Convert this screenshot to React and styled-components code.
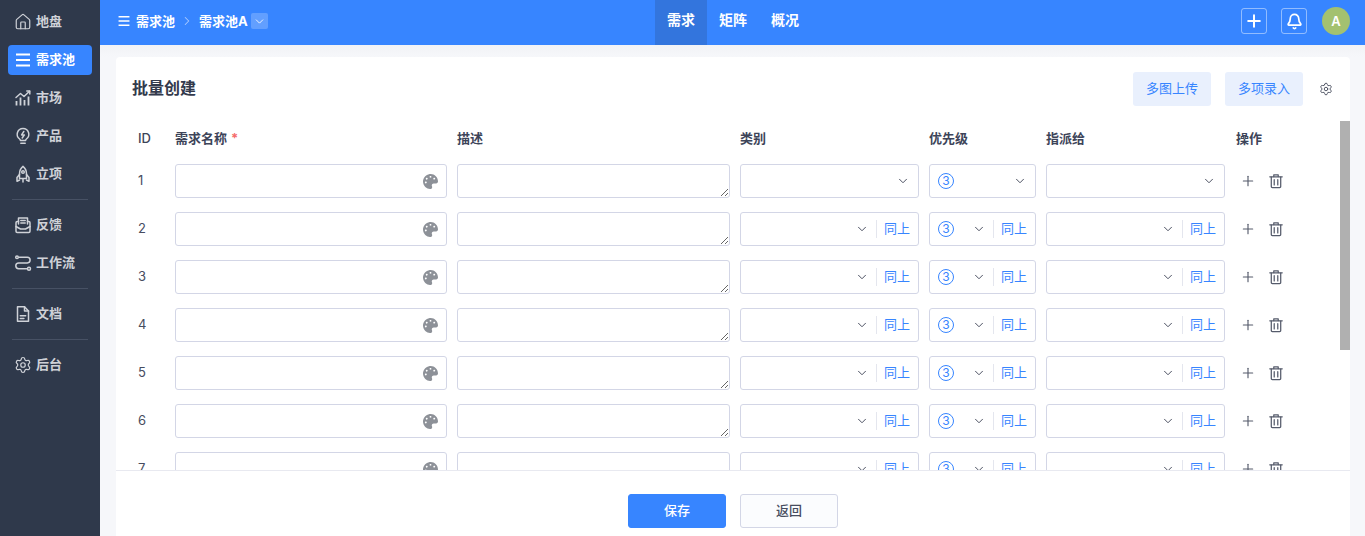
import React from "react";
import styled, { createGlobalStyle } from "styled-components";
import { House, Settings, Plus, Bell, ChevronDown, ChevronRight } from "lucide-react";
import { FaPalette } from "react-icons/fa";

const GlobalStyle = createGlobalStyle`
  html, body {
    margin: 0;
    height: 100%;
    overflow: hidden;
    font-family: Inter, "Noto Sans CJK SC", sans-serif;
    font-size: 13px;
  }
  #root { height: 100%; }
  * { box-sizing: border-box; }
`;

const Page = styled.div`
  display: flex;
  height: 100%;
  background: #f5f6f9;
`;

const Sidebar = styled.nav`
  width: 100px;
  flex-shrink: 0;
  padding: 7px 8px 0;
  display: flex;
  flex-direction: column;
  gap: 8px;
  background: #2f394b;
`;

const NavItem = styled.div`
  display: flex;
  align-items: center;
  gap: 4px;
  height: 30px;
  padding-left: 6px;
  border-radius: 4px;
  font-size: 13px;
  font-weight: 700;
  color: ${({ $active }) => ($active ? "#fff" : "#cfd2d8")};
  background: ${({ $active }) => ($active ? "#3785ff" : "transparent")};
`;

const NavLabel = styled.span`
  padding-bottom: 3px;
`;

const NavDivider = styled.div`
  height: 1px;
  margin: 2px 4px;
  background: #475164;
`;

const Content = styled.div`
  flex: 1;
  min-width: 0;
  display: flex;
  flex-direction: column;
`;

const Topbar = styled.header`
  height: 45px;
  flex-shrink: 0;
  display: grid;
  grid-template-columns: 1fr auto 1fr;
  align-items: stretch;
  padding: 0 15px 0 16px;
  background: #3785ff;
  color: #fff;
`;

const Crumbs = styled.div`
  display: flex;
  align-items: center;
  padding: 0 0 3px 1px;
  font-size: 13px;
  font-weight: 700;
`;

const CrumbText = styled.span`
  margin-left: ${({ $gap }) => $gap || 0}px;
  padding-bottom: 2px;
`;

const CrumbArrow = styled.span`
  display: flex;
  margin: 0 5px;
  color: #a9c9ff;
`;

const CrumbDrop = styled.span`
  width: 17px;
  height: 16px;
  margin-left: 3px;
  display: flex;
  align-items: center;
  justify-content: center;
  border-radius: 2px;
  background: rgba(255, 255, 255, 0.22);
`;

const Tabs = styled.div`
  display: flex;
`;

const Tab = styled.div`
  display: flex;
  align-items: center;
  padding: 0 12px 8px;
  font-size: 14px;
  font-weight: 700;
  background: ${({ $active }) => ($active ? "#3375dd" : "transparent")};
`;

const TopActions = styled.div`
  display: flex;
  align-items: center;
  justify-content: flex-end;
  padding-bottom: 3px;
`;

const IconBox = styled.div`
  width: 26px;
  height: 26px;
  margin-right: 14px;
  display: flex;
  align-items: center;
  justify-content: center;
  border: 1px solid rgba(255, 255, 255, 0.45);
  border-radius: 3px;
`;

const Avatar = styled.div`
  width: 28px;
  height: 28px;
  margin-left: 1px;
  display: flex;
  align-items: center;
  justify-content: center;
  border-radius: 50%;
  font-size: 13px;
  font-weight: 600;
  background: #a3c170;
`;

const Main = styled.main`
  flex: 1;
  min-height: 0;
  padding: 12px 15px 0 16px;
  background: linear-gradient(#f2f3f6, #f6f7fa 12px);
`;

const Card = styled.section`
  height: 100%;
  display: flex;
  flex-direction: column;
  border-radius: 4px 4px 0 0;
  background: #fff;
`;

const CardHead = styled.div`
  height: 64px;
  flex-shrink: 0;
  display: flex;
  align-items: center;
  padding: 0 17px 0 16px;
`;

const CardTitle = styled.h2`
  flex: 1;
  margin: 0;
  padding-bottom: 4px;
  font-size: 16px;
  font-weight: 700;
  color: #333a4c;
`;

const LightButton = styled.button`
  width: 78px;
  height: 34px;
  margin-right: 14px;
  padding: 0 0 3px;
  border: 0;
  border-radius: 3px;
  font: inherit;
  color: #3785ff;
  background: #e9f0fd;
`;

const GearWrap = styled.span`
  display: flex;
  margin-left: 2px;
  color: #4a5060;
`;

const TableArea = styled.div`
  position: relative;
  flex: 1;
  min-height: 0;
  overflow: hidden;
  padding-left: 22px;
`;

const ScrollThumb = styled.div`
  position: absolute;
  top: 0;
  right: 0;
  width: 10px;
  height: 229px;
  background: #b0b0b0;
`;

const Row = styled.div`
  display: grid;
  grid-template-columns: 27px 272px 273px 179px 107px 179px auto;
  column-gap: 10px;
  align-items: center;
  height: ${({ $head }) => ($head ? "36px" : "48px")};
  & > *:last-child { margin-left: 1px; }
`;

const HeadCell = styled.div`
  padding-bottom: 3px;
  font-size: 13px;
  font-weight: ${({ $plain }) => ($plain ? 500 : 700)};
  color: #3d4459;
`;

const Required = styled.span`
  margin-left: 4px;
  color: #f56c6c;
`;

const IdCell = styled.div`
  padding-bottom: 2px;
  font-size: 13px;
  color: #474d60;
`;

const InputWrap = styled.div`
  height: 34px;
  display: flex;
  align-items: center;
  padding-right: 8px;
  border: 1px solid #d3d6e6;
  border-radius: 3px;
  color: #8d9198;
`;

const TextInput = styled.input`
  flex: 1;
  min-width: 0;
  height: 100%;
  border: 0;
  outline: 0;
  background: transparent;
`;

const TextArea = styled.textarea`
  display: block;
  width: 100%;
  height: 34px;
  min-height: 34px;
  padding: 4px 8px;
  border: 1px solid #d3d6e6;
  border-radius: 3px;
  outline: 0;
  resize: vertical;
`;

const Select = styled.div`
  height: 34px;
  display: flex;
  align-items: center;
  padding-left: 8px;
  border: 1px solid #d3d6e6;
  border-radius: 3px;
  color: #3f4557;
`;

const SelectValue = styled.div`
  flex: 1;
  min-width: 0;
  display: flex;
`;

const Chevron = styled.span`
  display: flex;
  margin-right: ${({ $tail }) => ($tail ? "7px" : "8px")};
`;

const SameAbove = styled.span`
  width: 43px;
  height: 18px;
  display: flex;
  align-items: center;
  justify-content: center;
  margin-right: -1px;
  padding: 0 2px 2px 0;
  border-left: 1px solid #e4e6ee;
  font-size: 13px;
  line-height: 1;
  color: #3785ff;
`;

const Circled = styled.span`
  width: 16px;
  height: 16px;
  display: flex;
  align-items: center;
  justify-content: center;
  border: 1px solid #3785ff;
  border-radius: 50%;
  font-size: 12px;
  line-height: 1;
  color: #3785ff;
`;

const Ops = styled.div`
  display: flex;
  align-items: center;
  gap: 12px;
  padding-left: 4px;
  color: #555b6b;
`;

const CardFoot = styled.div`
  height: 66px;
  flex-shrink: 0;
  display: flex;
  justify-content: center;
  gap: 14px;
  padding-top: 23px;
  border-top: 1px solid #e8e9f0;
`;

const FootButton = styled.button`
  width: 98px;
  height: 34px;
  padding: 0 0 3px;
  border: 1px solid ${({ $primary }) => ($primary ? "#3785ff" : "#d3d6e6")};
  border-radius: 3px;
  font: inherit;
  font-weight: 500;
  color: ${({ $primary }) => ($primary ? "#fff" : "#474d60")};
  background: ${({ $primary }) => ($primary ? "#3785ff" : "#fbfcfe")};
`;

const Glyph = ({ size = 18, width = 1.5, children }) => (
  <svg
    width={size}
    height={size}
    viewBox="0 0 18 18"
    fill="none"
    stroke="currentColor"
    strokeWidth={width}
    strokeLinecap="round"
    strokeLinejoin="round"
  >
    {children}
  </svg>
);

const MenuIcon = ({ size }) => (
  <Glyph size={size} width={2}>
    <path d="M2 3.5h14M2 9h14M2 14.5h14" strokeLinecap="butt" />
  </Glyph>
);

const MarketIcon = () => (
  <Glyph>
    <path d="M2 8.5 6.5 4.5l3.5 3L15.5 2.2" />
    <path d="M12.8 2h3v3" />
    <path d="M2.5 12v4.5M6.5 8.5v8M10.5 11v5.5M14.5 7.5v9" strokeWidth="1.8" strokeLinecap="butt" />
  </Glyph>
);

const BulbIcon = () => (
  <Glyph>
    <path d="M9 1.5a5.8 5.8 0 0 0-3.4 10.5c.5.4.8 1 .8 1.6h5.2c0-.6.3-1.2.8-1.6A5.8 5.8 0 0 0 9 1.5z" />
    <path d="M9.8 4.5 7.6 7.9h2.8L8.2 11" />
    <path d="M6.8 16.3h4.4" />
  </Glyph>
);

const RocketIcon = () => (
  <Glyph>
    <path d="M9 1.3c2.5 2 3.5 4.6 3.5 7.4v4.8h-7V8.700c0-2.800 1-5.400 3.500-7.400z" />
    <path d="M5.500 9.500 3 12.500v3.800l2.500-1.300M12.500 9.500l2.500 3v3.800L12.500 15" />
    <circle cx="9" cy="7" r="1.300" />
    <path d="M9 14.500v2.500" />
  </Glyph>
);

const MailIcon = () => (
  <Glyph>
    <path d="M4.500 8V2h9v6" />
    <path d="M6.800 4.500h4.400M6.800 7h4.400" />
    <path d="M4.500 5.500H3.200a1.200 1.200 0 0 0-1.200 1.200v8.600a1.200 1.200 0 0 0 1.200 1.200h11.600a1.200 1.200 0 0 0 1.200-1.200V6.700a1.200 1.200 0 0 0-1.200-1.200h-1.300" />
    <path d="M2 10.500l4.500 2.500h5l4.500-2.500" />
  </Glyph>
);

const FlowIcon = () => (
  <Glyph>
    <circle cx="3" cy="3.300" r="1.300" />
    <path d="M5 3.300h8.300a2.800 2.800 0 0 1 0 5.600H4.700a2.900 2.900 0 0 0 0 5.800h8" />
    <circle cx="15" cy="14.700" r="1.500" />
  </Glyph>
);

const DocIcon = () => (
  <Glyph>
    <path d="M3.500 1.800h7l4 4.200v10.200h-11z" />
    <path d="M10.500 1.800V6h4" />
    <path d="M6.300 10.800h5.400M6.300 13.500h3.600" />
  </Glyph>
);

const TrashIcon = () => (
  <Glyph size={16} width={1.4}>
    <path d="M2 4.300h14" />
    <path d="M6.500 4V2h5v2" />
    <path d="M3.700 4.500v10.800a1.200 1.200 0 0 0 1.200 1.200h8.200a1.200 1.200 0 0 0 1.200-1.200V4.500" />
    <path d="M7 7.500v6M11 7.500v6" />
  </Glyph>
);

const navTop = [
  { icon: <House size={18} strokeWidth={1.6} />, label: "地盘" },
  { icon: <MenuIcon size={18} />, label: "需求池", active: true },
  { icon: <MarketIcon />, label: "市场" },
  { icon: <BulbIcon />, label: "产品" },
  { icon: <RocketIcon />, label: "立项" },
];

const NavRow = ({ icon, label, active }) => (
  <NavItem $active={active}>
    {icon}
    <NavLabel>{label}</NavLabel>
  </NavItem>
);

const ArrowDown = ({ tail }) => (
  <Chevron $tail={tail}>
    <ChevronDown size={14} strokeWidth={1.6} />
  </Chevron>
);

const SelectBox = ({ value, tail }) => (
  <Select>
    <SelectValue>{value}</SelectValue>
    <ArrowDown tail={tail} />
    {tail && <SameAbove>同上</SameAbove>}
  </Select>
);

const ids = [1, 2, 3, 4, 5, 6, 7];

const App = () => {
  return (
    <Page>
      <GlobalStyle />
      <Sidebar>
        {navTop.map((item) => (
          <NavRow key={item.label} {...item} />
        ))}
        <NavDivider />
        <NavRow icon={<MailIcon />} label="反馈" />
        <NavRow icon={<FlowIcon />} label="工作流" />
        <NavDivider />
        <NavRow icon={<DocIcon />} label="文档" />
        <NavDivider />
        <NavRow icon={<Settings size={18} strokeWidth={1.6} />} label="后台" />
      </Sidebar>

      <Content>
        <Topbar>
          <Crumbs>
            <MenuIcon size={14} />
            <CrumbText $gap={5}>需求池</CrumbText>
            <CrumbArrow>
              <ChevronRight size={14} strokeWidth={1.8} />
            </CrumbArrow>
            <CrumbText>需求池A</CrumbText>
            <CrumbDrop>
              <ChevronDown size={13} strokeWidth={1.6} />
            </CrumbDrop>
          </Crumbs>
          <Tabs>
            <Tab $active>需求</Tab>
            <Tab>矩阵</Tab>
            <Tab>概况</Tab>
          </Tabs>
          <TopActions>
            <IconBox>
              <Plus size={20} strokeWidth={2.4} />
            </IconBox>
            <IconBox>
              <Bell size={17} strokeWidth={2.4} />
            </IconBox>
            <Avatar>A</Avatar>
          </TopActions>
        </Topbar>

        <Main>
          <Card>
            <CardHead>
              <CardTitle>批量创建</CardTitle>
              <LightButton>多图上传</LightButton>
              <LightButton>多项录入</LightButton>
              <GearWrap>
                <Settings size={14} strokeWidth={1.6} />
              </GearWrap>
            </CardHead>

            <TableArea>
              <Row $head>
                <HeadCell $plain>ID</HeadCell>
                <HeadCell>
                  需求名称<Required>*</Required>
                </HeadCell>
                <HeadCell>描述</HeadCell>
                <HeadCell>类别</HeadCell>
                <HeadCell>优先级</HeadCell>
                <HeadCell>指派给</HeadCell>
                <HeadCell>操作</HeadCell>
              </Row>
              {ids.map((id) => {
                const tail = id > 1;
                return (
                  <Row key={id}>
                    <IdCell>{id}</IdCell>
                    <InputWrap>
                      <TextInput />
                      <FaPalette size={15} />
                    </InputWrap>
                    <TextArea />
                    <SelectBox tail={tail} />
                    <SelectBox tail={tail} value={<Circled>3</Circled>} />
                    <SelectBox tail={tail} />
                    <Ops>
                      <Plus size={16} strokeWidth={1.7} />
                      <TrashIcon />
                    </Ops>
                  </Row>
                );
              })}
              <ScrollThumb />
            </TableArea>

            <CardFoot>
              <FootButton $primary>保存</FootButton>
              <FootButton>返回</FootButton>
            </CardFoot>
          </Card>
        </Main>
      </Content>
    </Page>
  );
};

export default App;
